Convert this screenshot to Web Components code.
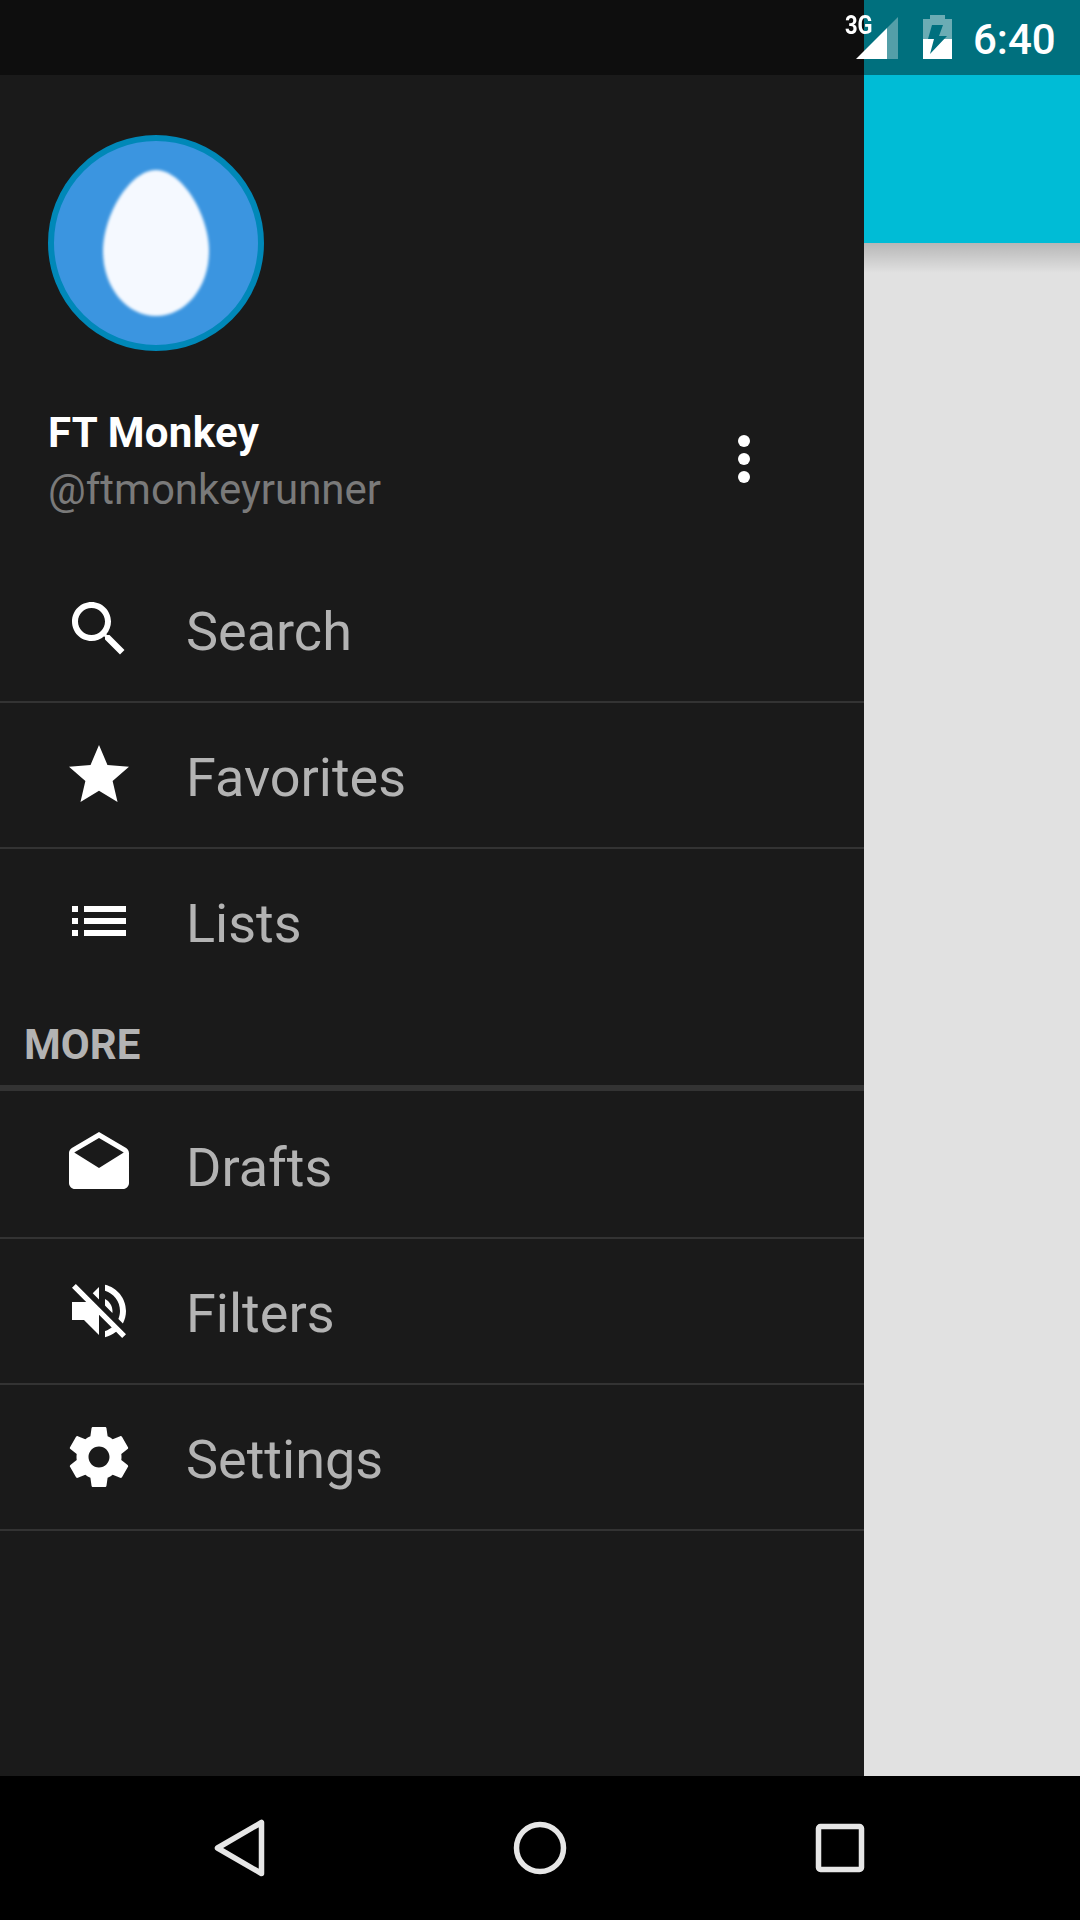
<!DOCTYPE html>
<html><head><meta charset="utf-8"><style>
html,body{margin:0;padding:0;background:#000}
body{width:1080px;height:1920px;overflow:hidden;font-family:Roboto,"Liberation Sans",sans-serif}
</style></head><body>
<phone-screen>
<status-bar slot="status"></status-bar>
<nav-drawer slot="drawer">
<profile-header name="FT Monkey" handle="@ftmonkeyrunner"></profile-header>
<menu-row label="Search" icon="search"></menu-row>
<menu-row label="Favorites" icon="star"></menu-row>
<menu-row label="Lists" icon="list" plain></menu-row>
<section-title>MORE</section-title>
<menu-row label="Drafts" icon="drafts"></menu-row>
<menu-row label="Filters" icon="mute"></menu-row>
<menu-row label="Settings" icon="gear"></menu-row>
</nav-drawer>
<app-content slot="content"></app-content>
<nav-bar slot="nav"></nav-bar>
</phone-screen>
<script>
const def=(n,html)=>customElements.define(n,class extends HTMLElement{constructor(){super();this.attachShadow({mode:'open'}).innerHTML=typeof html==='function'?html(this):html;}});

def('phone-screen',`<style>
:host{display:grid;width:1080px;height:1920px;grid-template-columns:864px 216px;grid-template-rows:75px 1701px 144px}
::slotted([slot=status]){grid-column:1/3;grid-row:1}
::slotted([slot=drawer]){grid-column:1;grid-row:2}
::slotted([slot=content]){grid-column:2;grid-row:2}
::slotted([slot=nav]){grid-column:1/3;grid-row:3}
</style><slot name="status"></slot><slot name="drawer"></slot><slot name="content"></slot><slot name="nav"></slot>`);

def('status-bar',`<style>
:host{display:flex;height:75px;background:linear-gradient(to right,#0e0e0e 864px,#00707e 864px);color:#fff;position:relative}
.wrap{margin-left:856px;display:flex;align-items:flex-start;height:75px}
.net{position:absolute;left:845px;top:13px;font:700 25px/26px Roboto,sans-serif;transform:scaleX(.88);transform-origin:left;z-index:1}
svg{display:block;flex:none}
.sig{margin-top:17px}
.bat{margin:15px 0 0 25px}
.time{font:500 42px/50px Roboto,sans-serif;margin:15px 0 0 21px}
</style><span class="net">3G</span><div class="wrap">
<svg class="sig" width="42" height="42" viewBox="0 0 42 42"><path fill="#fff" fill-opacity=".33" d="M42 0V42H31V11Z"/><path fill="#fff" d="M31 11V42H0Z"/></svg>
<svg class="bat" width="29" height="44" viewBox="0 0 29 44"><path fill="#fff" fill-opacity=".42" d="M7 0H22V4H29V24H0V4H7Z"/><path fill="#fff" d="M0 24H29V44H0Z"/><path fill="#00707e" d="M9 10H20L16 21H24L7 39 11 24H5Z"/></svg>
<span class="time">6:40</span></div>`);

def('nav-drawer',`<style>:host{display:flex;flex-direction:column;background:#1a1a1a;height:1701px}</style><slot></slot>`);

def('profile-header',h=>`<style>
:host{display:block;position:relative;height:482px;box-sizing:border-box;padding:60px 0 0 48px;color:#fff;flex:none}
.av{display:block}
.name{font:700 42px/48px Roboto,sans-serif;letter-spacing:.3px;margin-top:58px}
.handle{font:400 42px/48px Roboto,sans-serif;color:#7a7a7a;margin-top:9px}
.more{position:absolute;left:738px;top:360px;display:flex;flex-direction:column;gap:6px}
.more i{width:12px;height:12px;border-radius:50%;background:#fff}
</style>
<svg class="av" width="216" height="216" viewBox="0 0 216 216">
<defs><filter id="b" x="-10%" y="-10%" width="120%" height="120%"><feGaussianBlur stdDeviation="1.6"/></filter></defs>
<circle cx="108" cy="108" r="105" fill="#3b95e0" stroke="#0088b8" stroke-width="6"/>
<path filter="url(#b)" fill="#f5f9ff" d="M108 35C134 35 161 80 161 116C161 153 137 181 108 181C79 181 55 153 55 116C55 80 82 35 108 35Z"/>
</svg>
<div class="name">${h.getAttribute('name')}</div>
<div class="handle">${h.getAttribute('handle')}</div>
<div class="more"><i></i><i></i><i></i></div>`);

const svg=p=>`<svg width="72" height="72" viewBox="0 0 24 24"><path fill="#fff" d="${p}"/></svg>`;
const icons={
search:svg('M15.5 14h-.79l-.28-.27C15.41 12.59 16 11.11 16 9.5 16 5.91 13.09 3 9.5 3S3 5.91 3 9.5 5.91 16 9.5 16c1.61 0 3.09-.59 4.23-1.57l.27.28v.79l5 4.99L20.49 19l-4.99-5zm-6 0C7.01 14 5 11.99 5 9.5S7.01 5 9.5 5 14 7.01 14 9.5 11.99 14 9.500 14z'),
star:svg('M12 17.27 18.18 21l-1.64-7.03L22 9.24l-7.19-.61L12 2 9.19 8.63 2 9.24l5.46 4.73L5.82 21z'),
list:svg('M3 7h2v2H3zM7 7h14v2H7zM3 11h2v2H3zM7 11h14v2H7zM3 15h2v2H3zM7 15h14v2H7z'),
drafts:svg('M21.99 8c0-.72-.37-1.35-.94-1.7L12 1 2.95 6.3C2.38 6.65 2 7.28 2 8v10c0 1.1.9 2 2 2h16c1.1 0 2-.9 2-2l-.01-10zM12 13 3.74 7.84 12 3l8.26 4.84L12 13z'),
mute:svg('M16.5 12c0-1.77-1.02-3.29-2.5-4.03v2.21l2.45 2.45c.03-.2.05-.41.05-.63zm2.5 0c0 .94-.2 1.82-.54 2.64l1.51 1.51C20.63 14.91 21 13.5 21 12c0-4.28-2.99-7.86-7-8.77v2.06c2.89.86 5 3.54 5 6.71zM4.27 3 3 4.27 7.73 9H3v6h4l5 5v-6.73l4.25 4.25c-.67.52-1.42.93-2.25 1.18v2.06c1.38-.31 2.63-.95 3.69-1.81L19.73 21 21 19.73l-9-9L4.27 3zM12 4 9.91 6.09 12 8.18V4z'),
gear:svg('M19.43 12.98c.04-.32.07-.64.07-.98s-.03-.66-.07-.98l2.11-1.65c.19-.15.24-.42.12-.64l-2-3.46c-.12-.22-.39-.3-.61-.22l-2.49 1c-.52-.4-1.08-.73-1.69-.98l-.38-2.65C14.46 2.18 14.25 2 14 2h-4c-.25 0-.46.18-.49.42l-.38 2.65c-.61.25-1.17.59-1.69.98l-2.49-1c-.23-.09-.49 0-.61.22l-2 3.46c-.13.22-.07.49.12.64l2.11 1.65c-.04.32-.07.65-.07.98s.03.66.07.98l-2.11 1.65c-.19.15-.24.42-.12.64l2 3.46c.12.22.39.3.61.22l2.49-1c.52.4 1.08.73 1.69.98l.38 2.65c.03.24.24.42.49.42h4c.25 0 .46-.18.49-.42l.38-2.65c.61-.25 1.17-.59 1.69-.98l2.49 1c.23.09.49 0 .61-.22l2-3.46c.12-.22.07-.49-.12-.64l-2.11-1.65zM12 15.5c-1.93 0-3.5-1.57-3.5-3.5s1.57-3.5 3.5-3.5 3.5 1.57 3.5 3.5-1.57 3.5-3.5 3.5z')
};
def('menu-row',h=>`<style>
:host{display:flex;align-items:center;height:144px;${h.hasAttribute('plain')?'':'border-bottom:2px solid #333;'}color:#b3b3b3;flex:none}
.ic{width:72px;height:72px;margin-left:63px}
svg{display:block}
.t{font:400 54px/54px Roboto,sans-serif;margin-left:51px;padding-top:5px}
</style><div class="ic">${icons[h.getAttribute('icon')]}</div><span class="t">${h.getAttribute('label')}</span>`);

def('section-title',`<style>
:host{display:block;height:98px;box-sizing:border-box;padding:28px 0 0 24px;border-bottom:6px solid #333;margin-bottom:2px;color:#b3b3b3;font:700 42px/48px Roboto,sans-serif;flex:none}
</style><slot></slot>`);

def('app-content',`<style>
:host{display:block;background:#e1e1e1;height:1701px}
.bar{height:168px;background:#00bcd6}
.sh{height:30px;background:linear-gradient(to bottom,rgba(0,0,0,.19),rgba(0,0,0,0))}
</style><div class="bar"></div><div class="sh"></div>`);

def('nav-bar',`<style>
:host{display:block;background:#000;height:144px}
svg{display:block}
</style><svg width="1080" height="144" viewBox="0 0 1080 144" fill="none" stroke="#e6e6e6" stroke-width="5.5" stroke-linejoin="round">
<path d="M217.500 72 261.500 46.500V97.500Z"/>
<circle cx="540" cy="72" r="23.500"/>
<rect x="818.500" y="50.500" width="43" height="43" rx="2"/></svg>`);
</script></body></html>
